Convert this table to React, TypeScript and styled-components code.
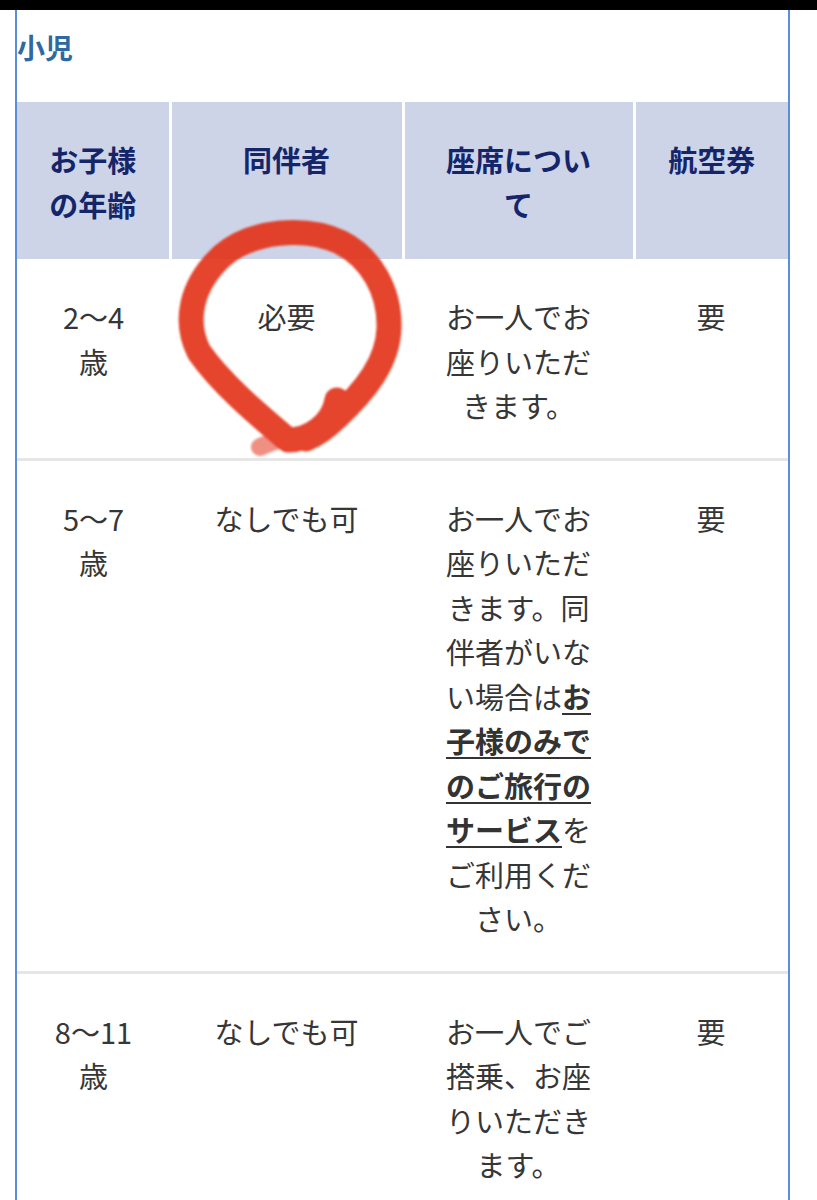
import styled, { createGlobalStyle } from "styled-components";

const GlobalStyle = createGlobalStyle`
  html, body {
    margin: 0;
    padding: 0;
    background: #fff;
  }
  body {
    font-family: "Noto Sans CJK JP", "Noto Sans", sans-serif;
    color: #333;
  }
`;

const Page = styled.div`
  position: relative;
  width: 817px;
  min-height: 1200px;
  overflow: hidden;
`;

const TopBar = styled.div`
  height: 10px;
  background: #000;
`;

const Frame = styled.div`
  margin-left: 15px;
  width: 775px;
  min-height: 1190px;
  box-sizing: border-box;
  border-left: 2px solid #5b8ed8;
  border-right: 2px solid #5b8ed8;
`;

const Title = styled.h2`
  margin: 0;
  padding-top: 17px;
  font-size: 28px;
  line-height: 40px;
  font-weight: 700;
  color: #2f69a1;
`;

const Table = styled.table`
  margin-top: 35px;
  width: 771px;
  table-layout: fixed;
  border-collapse: collapse;
`;

const HeadCell = styled.th<{ $narrow?: boolean }>`
  background: #cdd4e8;
  color: #15256a;
  font-size: 29px;
  font-weight: 700;
  line-height: 45px;
  text-align: center;
  vertical-align: top;
  padding: 35px ${(p) => (p.$narrow ? "40px" : "10px")} 32px;
  border-left: 3px solid #fff;

  &:first-child {
    border-left: none;
  }
`;

const BodyRow = styled.tr`
  border-bottom: 3px solid #e6e6e6;
`;

const Cell = styled.td<{ $narrow?: boolean }>`
  font-size: 29px;
  line-height: 44.5px;
  color: #363636;
  text-align: center;
  vertical-align: top;
  padding: 35px ${(p) => (p.$narrow ? "40px" : "10px")} 30px;
`;

const ServiceLink = styled.a`
  color: #333;
  font-weight: 700;
  text-decoration: underline;
  text-underline-offset: 4px;
  text-decoration-thickness: 2px;
`;

const Scribble = styled.svg`
  position: absolute;
  top: 0;
  left: 0;
  pointer-events: none;
`;

type Row = {
  range: string;
  companion: string;
  seat: React.ReactNode;
  ticket: string;
};

const rows: Row[] = [
  {
    range: "2〜4",
    companion: "必要",
    seat: "お一人でお座りいただきます。",
    ticket: "要",
  },
  {
    range: "5〜7",
    companion: "なしでも可",
    seat: (
      <>
        お一人でお座りいただきます。同伴者がいない場合は
        <ServiceLink href="#">お子様のみでのご旅行のサービス</ServiceLink>
        をご利用ください。
      </>
    ),
    ticket: "要",
  },
  {
    range: "8〜11",
    companion: "なしでも可",
    seat: "お一人でご搭乗、お座りいただきます。",
    ticket: "要",
  },
];

const App = () => {
  return (
    <Page>
      <GlobalStyle />
      <TopBar />
      <Frame>
        <Title>小児</Title>
        <Table>
          <colgroup>
            <col style={{ width: 153 }} />
            <col style={{ width: 233 }} />
            <col style={{ width: 231 }} />
            <col style={{ width: 154 }} />
          </colgroup>
          <thead>
            <tr>
              <HeadCell>
                お子様
                <br />
                の年齢
              </HeadCell>
              <HeadCell>同伴者</HeadCell>
              <HeadCell $narrow>座席について</HeadCell>
              <HeadCell>航空券</HeadCell>
            </tr>
          </thead>
          <tbody>
            {rows.map((row) => (
              <BodyRow key={row.range}>
                <Cell>
                  {row.range}
                  <br />歳
                </Cell>
                <Cell>{row.companion}</Cell>
                <Cell $narrow>{row.seat}</Cell>
                <Cell>{row.ticket}</Cell>
              </BodyRow>
            ))}
          </tbody>
        </Table>
      </Frame>
      {/* hand-drawn marker circle around 必要 */}
      <Scribble viewBox="0 0 817 1200" width="817" height="1200">
        <defs>
          <filter id="soft" x="-10%" y="-10%" width="120%" height="120%">
            <feGaussianBlur stdDeviation="0.9" />
          </filter>
        </defs>
        <g
          fill="none"
          stroke="#e3361a"
          strokeLinecap="round"
          strokeLinejoin="round"
          opacity="0.92"
          filter="url(#soft)"
        >
          <path
            strokeWidth="25"
            d="M 337 400 C 333 424, 310 440, 288 440 C 262 418, 222 385, 199 352 C 184 322, 190 286, 222 256 C 252 230, 305 226, 340 242 C 372 258, 390 292, 389 328 C 388 362, 366 390, 336 418 C 326 428, 318 434, 306 439"
          />
          <path strokeWidth="18" opacity="0.6" d="M 282 438 L 260 447" />
        </g>
      </Scribble>
    </Page>
  );
};

export default App;
